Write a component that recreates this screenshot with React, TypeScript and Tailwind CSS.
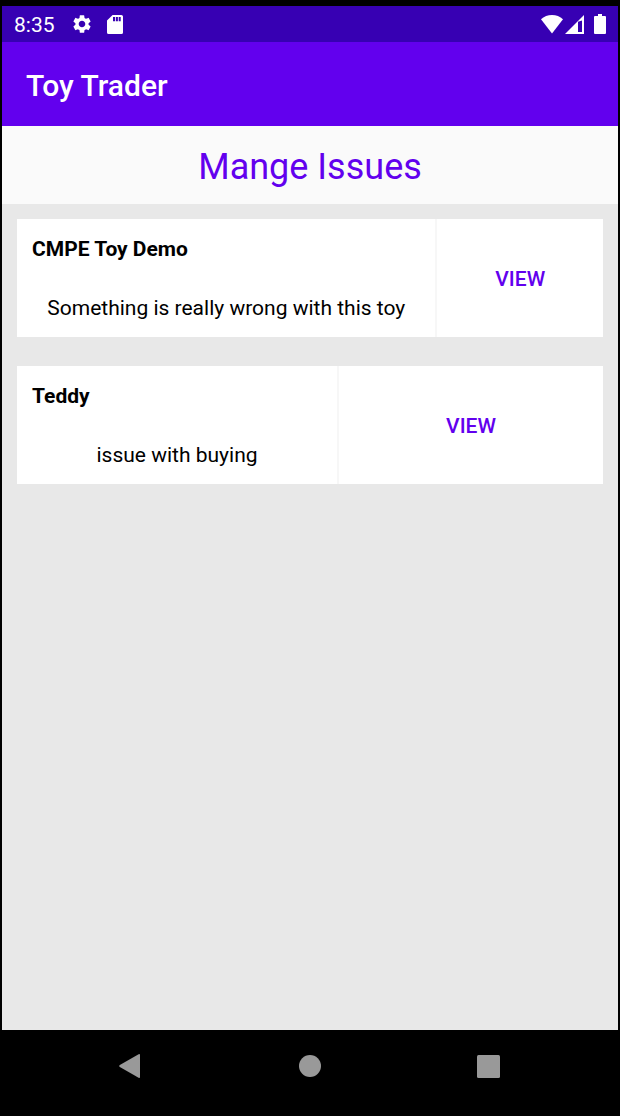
import { MdSettings } from "react-icons/md";

type Issue = { toy: string; description: string };

const issues: Issue[] = [
  { toy: "CMPE Toy Demo", description: "Something is really wrong with this toy" },
  { toy: "Teddy", description: "issue with buying" },
];

function SdCardIcon() {
  return (
    <svg width="16" height="19" viewBox="0 0 16 19" fill="#fff" aria-hidden="true">
      <path
        fillRule="evenodd"
        d="M5.6 0H14.4A1.6 1.6 0 0 1 16 1.6V17.4A1.6 1.6 0 0 1 14.4 19H1.6A1.6 1.6 0 0 1 0 17.4V5.6ZM6 2V6.300H8.100V2ZM8.900 2V6.300H10.900V2ZM11.700 2V6.300H13.700V2Z"
      />
    </svg>
  );
}

function WifiIcon() {
  return (
    <svg width="22" height="19" viewBox="0 0 22 19" fill="#fff" aria-hidden="true">
      <path d="M11 18.6 0 4.2C3 1.6 6.800 0 11 0S19 1.600 22 4.200Z" />
    </svg>
  );
}

function SignalIcon() {
  return (
    <svg width="19" height="19" viewBox="0 0 19 19" fill="#fff" aria-hidden="true">
      <path fillRule="evenodd" d="M0 19 19 0V19ZM17 5.500 13 6.800V17H17Z" />
    </svg>
  );
}

function BatteryIcon() {
  return (
    <svg width="12" height="20" viewBox="0 0 12 20" fill="#fff" aria-hidden="true">
      <path d="M4 0H8V2H11A1 1 0 0 1 12 3V19A1 1 0 0 1 11 20H1A1 1 0 0 1 0 19V3A1 1 0 0 1 1 2H4Z" />
    </svg>
  );
}

function BackIcon() {
  return (
    <svg width="24" height="24" viewBox="0 0 24 24" fill="#999" aria-hidden="true">
      <path d="M19.6.2Q21 -.4 21 1V23Q21 24.400 19.6 23.8L.8 12.900Q-.4 12 .8 11.100Z" />
    </svg>
  );
}

function StatusBar() {
  return (
    <div className="flex h-9 items-center bg-[#3700b3] px-3 text-white">
      <span className="pt-0.5 text-[21px] leading-8">8:35</span>
      <MdSettings className="ml-4 size-[22px]" aria-hidden="true" />
      <span className="ml-3.5">
        <SdCardIcon />
      </span>
      <div className="ml-auto flex items-center">
        <WifiIcon />
        <span className="ml-0.5">
          <SignalIcon />
        </span>
        <span className="ml-2.5">
          <BatteryIcon />
        </span>
      </div>
    </div>
  );
}

function IssueCard({ toy, description }: Issue) {
  return (
    <li className="flex bg-white">
      <div className="flex-auto border-r-2 border-[#f7f7f7] text-[21px] leading-[29px] text-black">
        <h2 className="px-[15px] pt-4 pb-3.5 font-bold">{toy}</h2>
        <p className="px-[15px] pt-4 pb-3.5 text-center">{description}</p>
      </div>
      <button
        type="button"
        aria-label={`View ${toy}`}
        className="grow basis-[135px] pt-[3px] text-[21px] font-medium text-[#6200ee] uppercase"
      >
        View
      </button>
    </li>
  );
}

function NavigationBar() {
  return (
    <nav className="grid h-[86px] grid-cols-3 place-items-center bg-black px-10 pb-3.5">
      <button type="button" aria-label="Back">
        <BackIcon />
      </button>
      <button type="button" aria-label="Home">
        <svg width="22" height="22" viewBox="0 0 22 22" fill="#999" aria-hidden="true">
          <circle cx="11" cy="11" r="11" />
        </svg>
      </button>
      <button type="button" aria-label="Recent apps">
        <svg width="23" height="23" viewBox="0 0 23 23" fill="#999" aria-hidden="true">
          <rect width="23" height="23" rx="1.5" />
        </svg>
      </button>
    </nav>
  );
}

export default function App() {
  return (
    <div className="flex min-h-screen flex-col bg-black px-0.5 pt-1.5 font-[Roboto,sans-serif]">
      <StatusBar />
      <header className="flex h-[84px] items-center bg-[#6200ee] px-6 pt-0.5">
        <span className="text-[30px] font-medium text-white">Toy Trader</span>
      </header>
      <main className="flex grow flex-col bg-[#e8e8e8]">
        <h1 className="bg-[#fafafa] pt-[17px] pb-[13px] text-center text-4xl leading-[48px] text-[#6200ee]">
          Mange Issues
        </h1>
        <ul className="flex flex-col gap-[29px] p-[15px]">
          {issues.map((issue) => (
            <IssueCard key={issue.toy} {...issue} />
          ))}
        </ul>
      </main>
      <NavigationBar />
    </div>
  );
}
